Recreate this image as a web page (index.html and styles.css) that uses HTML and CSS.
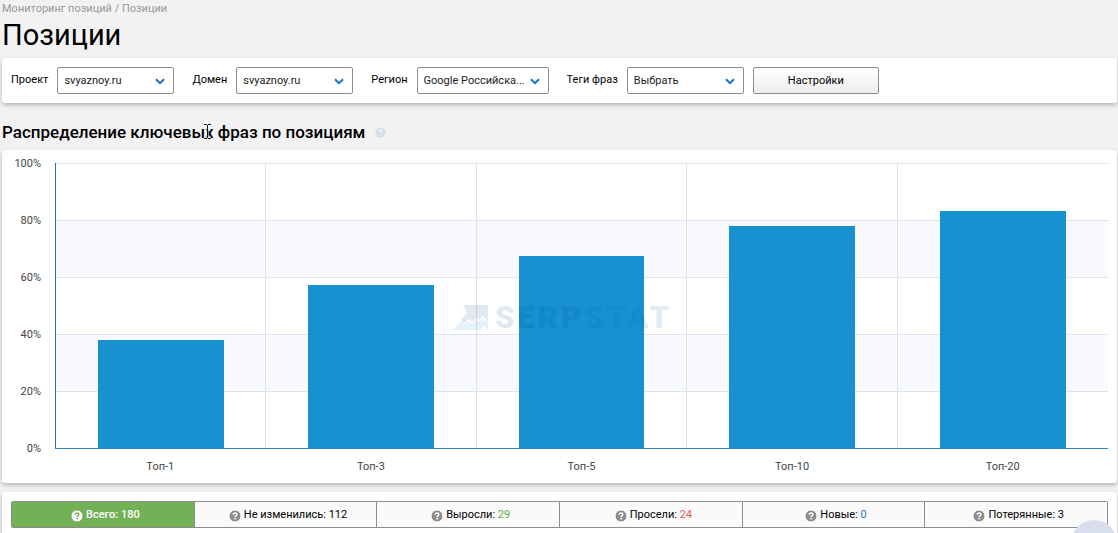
FILE: index.html
```html
<!DOCTYPE html>
<html lang="ru">
<head>
    <meta charset="UTF-8">
    <meta name="viewport" content="width=device-width, initial-scale=1.0">
    <title>Позиции</title>
    <link rel="stylesheet" href="styles.css">
</head>
<body>
    <svg class="sprite" aria-hidden="true">
        <symbol id="chevron" viewBox="0 0 10 7">
            <path d="M1 1.2 L5 5.2 L9 1.2" fill="none" stroke="#1b72c4" stroke-width="2"/>
        </symbol>
        <symbol id="help" viewBox="0 0 12 12">
            <circle cx="6" cy="6" r="6" fill="currentColor"/>
            <path d="M4.2 4.8 C4.2 2.5 7.8 2.5 7.8 4.6 C7.8 5.8 6.1 5.8 6.1 7.2 M6.1 8.1 V9.6" fill="none" stroke-width="1.5"/>
        </symbol>
    </svg>

    <nav class="breadcrumbs"><a href="#">Мониторинг позиций</a> / <span>Позиции</span></nav>
    <h1>Позиции</h1>

    <form class="card filters">
        <div class="field">
            <label for="project">Проект</label>
            <span class="select">
                <select id="project"><option>svyaznoy.ru</option></select>
                <svg class="chevron"><use href="#chevron"/></svg>
            </span>
        </div>
        <div class="field">
            <label for="domain">Домен</label>
            <span class="select">
                <select id="domain"><option>svyaznoy.ru</option></select>
                <svg class="chevron"><use href="#chevron"/></svg>
            </span>
        </div>
        <div class="field">
            <label for="region">Регион</label>
            <span class="select select-wide">
                <select id="region"><option>Google Российска...</option></select>
                <svg class="chevron"><use href="#chevron"/></svg>
            </span>
        </div>
        <div class="field">
            <label for="tags">Теги фраз</label>
            <span class="select">
                <select id="tags"><option>Выбрать</option></select>
                <svg class="chevron"><use href="#chevron"/></svg>
            </span>
            <button type="button" class="settings">Настройки</button>
        </div>
    </form>

    <div class="section-title">
        <h2>Распределение ключевых фраз по позициям</h2>
        <svg class="help help-light"><use href="#help"/></svg>
        <svg class="text-cursor" viewBox="0 0 9 17">
            <path d="M1 1.5 H3.5 M5.5 1.5 H8 M4.5 2 V15 M1 15.5 H3.5 M5.5 15.5 H8" fill="none" stroke="#fff" stroke-width="2"/>
            <path d="M1 1.5 H4 M5 1.5 H8 M4.5 2 V15 M1 15.5 H4 M5 15.5 H8" fill="none" stroke="#111" stroke-width="1"/>
        </svg>
    </div>

    <div class="card chart">
        <div class="y-axis">
            <span>100%</span>
            <span>80%</span>
            <span>60%</span>
            <span>40%</span>
            <span>20%</span>
            <span>0%</span>
        </div>
        <div class="plot">
            <div class="column"><div class="bar" style="height: 37.8%"></div></div>
            <div class="column"><div class="bar" style="height: 57.2%"></div></div>
            <div class="column"><div class="bar" style="height: 67.2%"></div></div>
            <div class="column"><div class="bar" style="height: 77.8%"></div></div>
            <div class="column"><div class="bar" style="height: 83.3%"></div></div>
            <div class="watermark">
                <svg viewBox="0 0 36 25">
                    <path d="M11 0 H36 V16 L31 11 L26 15 L24 13 L20 17 L17 14 L12 18 L9 15 L15 8 Z" fill="#003c82"/>
                    <path d="M0 25 L10 15 L13 19 L17 16 L20 19 L24 15 L27 17 L31 13 L33 16 L36 14 V25 L32 21 L28 25 Z" fill="#1791d0"/>
                </svg>
                <span><b>SERP</b><i>STAT</i></span>
            </div>
        </div>
        <div class="x-axis">
            <span>Топ-1</span>
            <span>Топ-3</span>
            <span>Топ-5</span>
            <span>Топ-10</span>
            <span>Топ-20</span>
        </div>
    </div>

    <div class="card summary">
        <div class="tabs">
            <button class="tab active"><svg class="help"><use href="#help"/></svg><span>Всего: 180</span></button>
            <button class="tab"><svg class="help"><use href="#help"/></svg><span>Не изменились: 112</span></button>
            <button class="tab"><svg class="help"><use href="#help"/></svg><span>Выросли: <span class="up">29</span></span></button>
            <button class="tab"><svg class="help"><use href="#help"/></svg><span>Просели: <span class="down">24</span></span></button>
            <button class="tab"><svg class="help"><use href="#help"/></svg><span>Новые: <span class="new">0</span></span></button>
            <button class="tab"><svg class="help"><use href="#help"/></svg><span>Потерянные: 3</span></button>
        </div>
    </div>

    <button class="to-top" aria-label="Наверх"></button>
</body>
</html>
```
FILE: styles.css
```css
* {
    box-sizing: border-box;
}
html {
    overflow: hidden;
}
body {
    margin: 0;
    padding: 0 1px 0 2px;
    background: #f2f2f2;
    color: #000;
    font-family: Roboto, "Liberation Sans", sans-serif;
    font-size: 11px;
}
h1, h2 {
    margin: 0;
}
select, button {
    font: inherit;
    color: inherit;
}
.sprite {
    position: absolute;
    width: 0;
    height: 0;
}
.breadcrumbs {
    line-height: 18px;
    color: #999;
}
.breadcrumbs a {
    color: inherit;
    text-decoration: none;
}
h1 {
    font-size: 29px;
    font-weight: 400;
    line-height: 34px;
    padding-bottom: 6px;
}
.card {
    background: #fff;
    border-radius: 3px;
    box-shadow: 0 2px 4px rgba(0, 0, 0, 0.25);
}
.filters {
    display: flex;
    gap: 18px;
    padding: 9px;
}
.field {
    display: flex;
    align-items: center;
    gap: 9px;
}
.field label {
    line-height: 24px;
    padding-bottom: 1px;
}
.select {
    position: relative;
    width: 117px;
}
.select-wide {
    width: 132px;
}
.select select {
    display: block;
    width: 100%;
    height: 27px;
    padding: 0 6px;
    appearance: none;
    background: #fff;
    border: 1px solid #8c8c8c;
    border-radius: 2px;
    color: #222;
}
.chevron {
    position: absolute;
    right: 9px;
    top: 11px;
    width: 10px;
    height: 7px;
    pointer-events: none;
}
.settings {
    width: 126px;
    height: 27px;
    padding: 0;
    background: linear-gradient(#fff, #ededed);
    border: 1px solid #8c8c8c;
    border-radius: 2px;
}
.section-title {
    position: relative;
    display: flex;
    align-items: center;
    gap: 10px;
    padding: 19px 0 8px;
}
h2 {
    font-size: 17px;
    font-weight: 500;
    line-height: 20px;
}
.help {
    flex: none;
    width: 12px;
    height: 12px;
    color: #8e8e8e;
    stroke: #fff;
}
.help-light {
    width: 11px;
    height: 11px;
    color: #d5dbec;
    stroke: #f2f2f2;
}
.text-cursor {
    position: absolute;
    left: 201px;
    top: 20px;
    width: 9px;
    height: 17px;
}
.chart {
    display: grid;
    grid-template-columns: 44px 1fr;
    grid-template-rows: 286px 34px;
    column-gap: 9px;
    padding: 13px 9px 0 0;
    margin-bottom: 9px;
}
.y-axis {
    display: flex;
    flex-direction: column;
    justify-content: space-between;
    margin: -7px 5px -8px 0;
    text-align: right;
    line-height: 16px;
    color: #444;
}
.plot {
    position: relative;
    display: grid;
    grid-template-columns: repeat(5, 1fr);
    border-left: 1px solid #2b6cb0;
    border-bottom: 1px solid #3180c3;
    background: repeating-linear-gradient(#dfe4ee 0 1px, #fff 1px 57px, #dfe4ee 57px 58px, #f9faff 58px 114px);
}
.column {
    display: flex;
    align-items: flex-end;
    justify-content: center;
    border-right: 1px solid #dde1ef;
}
.column:nth-child(5) {
    border-right: 0;
}
.bar {
    width: 60%;
    background: #1791d0;
}
.watermark {
    position: absolute;
    left: 50%;
    top: 50%;
    margin: -3px 0 0 -130px;
    display: flex;
    align-items: center;
    gap: 7px;
    opacity: 0.11;
    font-size: 31px;
    font-weight: 900;
    line-height: 30px;
    letter-spacing: 3px;
}
.watermark svg {
    width: 36px;
    height: 25px;
}
.watermark b {
    font-weight: inherit;
    color: #003c82;
}
.watermark i {
    font-style: normal;
    color: #0060a8;
}
.x-axis {
    grid-column: 2;
    display: grid;
    grid-template-columns: repeat(5, 1fr);
    text-align: center;
    line-height: 35px;
    color: #444;
}
.summary {
    padding: 9px;
    height: 60px;
}
.tabs {
    display: flex;
    border: 1px solid #8c8c8c;
    border-radius: 2px;
}
.tab {
    flex: 1;
    display: flex;
    align-items: center;
    justify-content: center;
    gap: 3px;
    height: 25px;
    padding: 0 0 0 5px;
    background: #fafafa;
    border: 0;
    border-left: 1px solid #8c8c8c;
}
.tab:first-child {
    border-left: 0;
}
.tab .help {
    margin-top: 3px;
}
.tab.active {
    background: #73b157;
    color: #fff;
    font-weight: 500;
}
.tab.active .help {
    color: #fff;
    stroke: #73b157;
}
.up {
    color: #5fac42;
}
.down {
    color: #dc5a56;
}
.new {
    color: #1b72c4;
}
.to-top {
    position: fixed;
    right: 1px;
    bottom: -33px;
    width: 46px;
    height: 46px;
    border: 0;
    border-radius: 50%;
    background: #d9deec;
}
```
